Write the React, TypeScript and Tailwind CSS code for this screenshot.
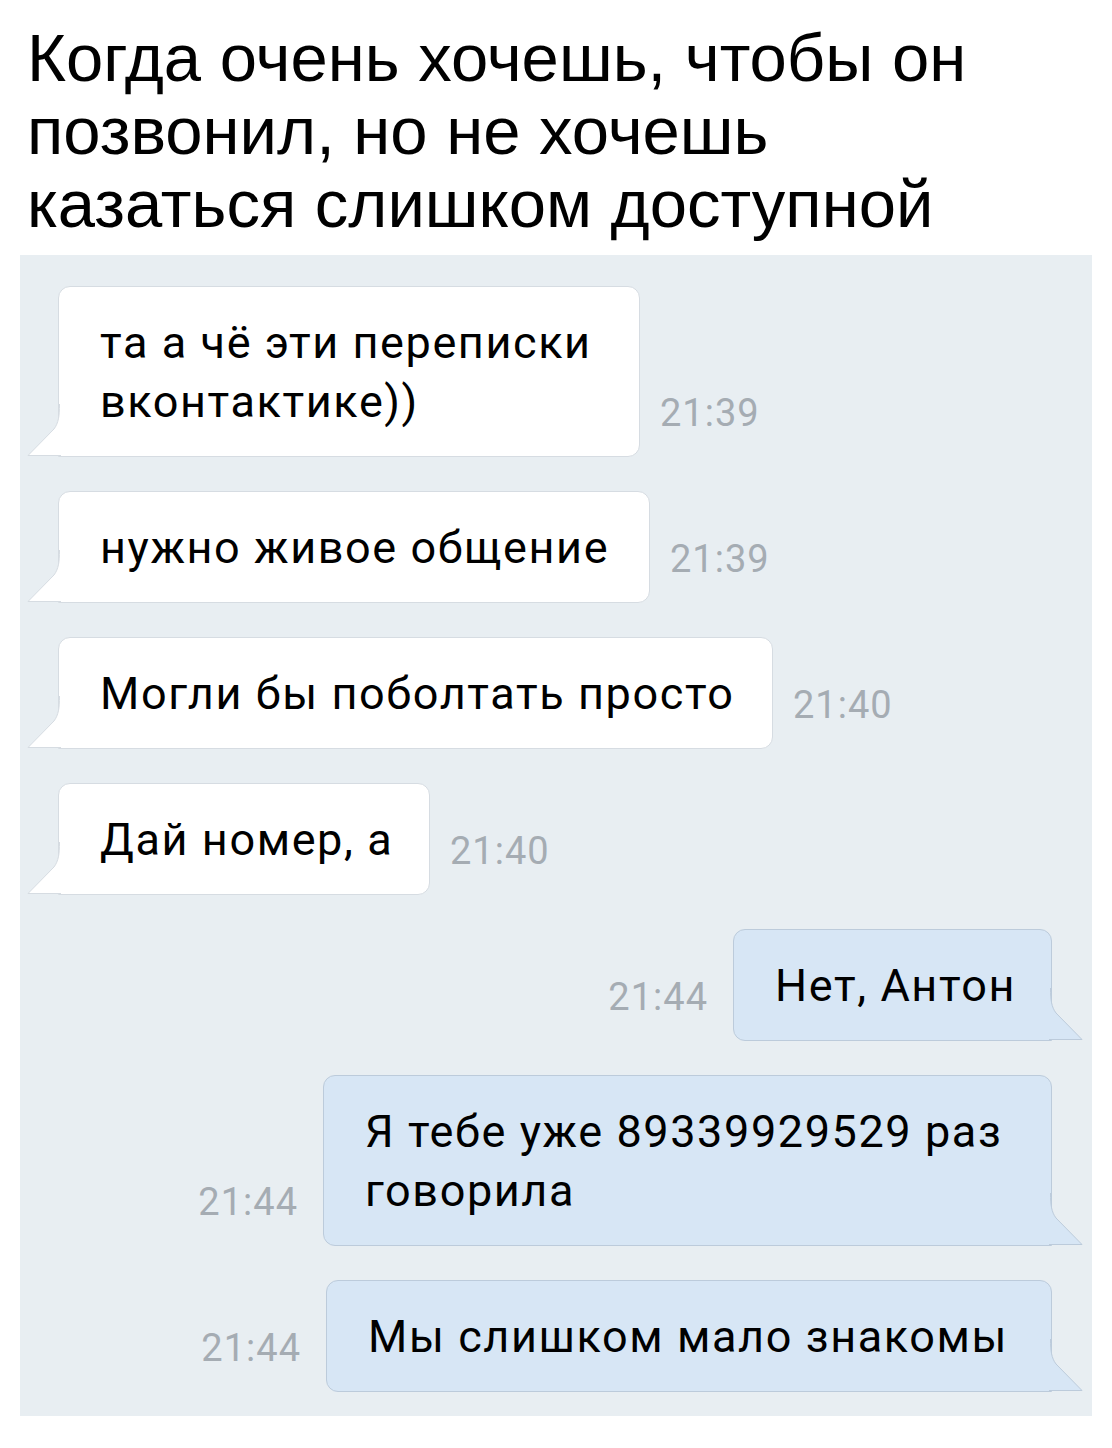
import React from 'react'

type Msg = {
  text: React.ReactNode
  time: string
  out?: boolean
  width: string
}

const messages: Msg[] = [
  { text: <>та а чё эти переписки<br />вконтактике))</>, time: '21:39', width: 'w-[582px]' },
  { text: 'нужно живое общение', time: '21:39', width: 'w-[592px]' },
  { text: 'Могли бы поболтать просто', time: '21:40', width: 'w-[715px]' },
  { text: 'Дай номер, а', time: '21:40', width: 'w-[372px]' },
  { text: 'Нет, Антон', time: '21:44', out: true, width: 'w-[319px]' },
  { text: <>Я тебе уже 89339929529 раз<br />говорила</>, time: '21:44', out: true, width: 'w-[729px]' },
  { text: 'Мы слишком мало знакомы', time: '21:44', out: true, width: 'w-[726px]' },
]

// tail at the bottom corner of a bubble
const Tail = ({ out }: { out?: boolean }) => {
  const fill = out ? '#d7e6f5' : '#ffffff'
  const stroke = out ? '#bccbdb' : '#d6dce2'
  return (
    <svg
      width="34"
      height="52"
      viewBox="0 0 34 52"
      className={out ? 'absolute -right-[32px] bottom-0 -scale-x-100' : 'absolute -left-[32px] bottom-0'}
    >
      <path d="M32.5 0 C32.5 12 31.5 19 27 25 L1 51.5 L34 51.5 L34 0 Z" fill={fill} />
      <path d="M32.5 0 C32.5 12 31.5 19 27 25 L1 51.5 L34 51.5" fill="none" stroke={stroke} strokeWidth="1" />
    </svg>
  )
}

const Bubble = ({ m }: { m: Msg }) => (
  <div
    className={
      'relative shrink-0 whitespace-nowrap border px-[41px] pt-[26px] pb-[25px] text-[45px] leading-[59px] tracking-[1.6px] text-black ' +
      m.width +
      (m.out
        ? ' rounded-[12px] rounded-br-none border-[#bccbdb] bg-[#d7e6f5]'
        : ' rounded-[12px] rounded-bl-none border-[#d6dce2] bg-white')
    }
  >
    {m.text}
    <Tail out={m.out} />
  </div>
)

const Time = ({ t }: { t: string }) => (
  <div className="mb-[25px] text-[38px] leading-[38px] tracking-[1px] text-[#a5acb3]">{t}</div>
)

export default function App() {
  return (
    <div className="min-h-[1448px] w-[1112px] bg-white" style={{ fontFamily: 'Roboto, "Noto Sans", sans-serif' }}>
      <h1
        className="px-[27px] pt-[21px] text-[67px] leading-[73px] text-black"
        style={{ fontFamily: '"Liberation Sans", Arial, sans-serif' }}
      >
        Когда очень хочешь, чтобы он
        <br />
        позвонил, но не хочешь
        <br />
        казаться слишком доступной
      </h1>

      <div className="mx-[20px] mt-[15px] flex flex-col gap-[34px] bg-[#e8eef2] pt-[31px] pb-[24px] pl-[38px] pr-[40px]">
        {messages.map((m, i) =>
          m.out ? (
            <div key={i} className="flex items-end justify-end gap-[25px]">
              <Time t={m.time} />
              <Bubble m={m} />
            </div>
          ) : (
            <div key={i} className="flex items-end gap-[20px]">
              <Bubble m={m} />
              <Time t={m.time} />
            </div>
          )
        )}
      </div>
    </div>
  )
}
